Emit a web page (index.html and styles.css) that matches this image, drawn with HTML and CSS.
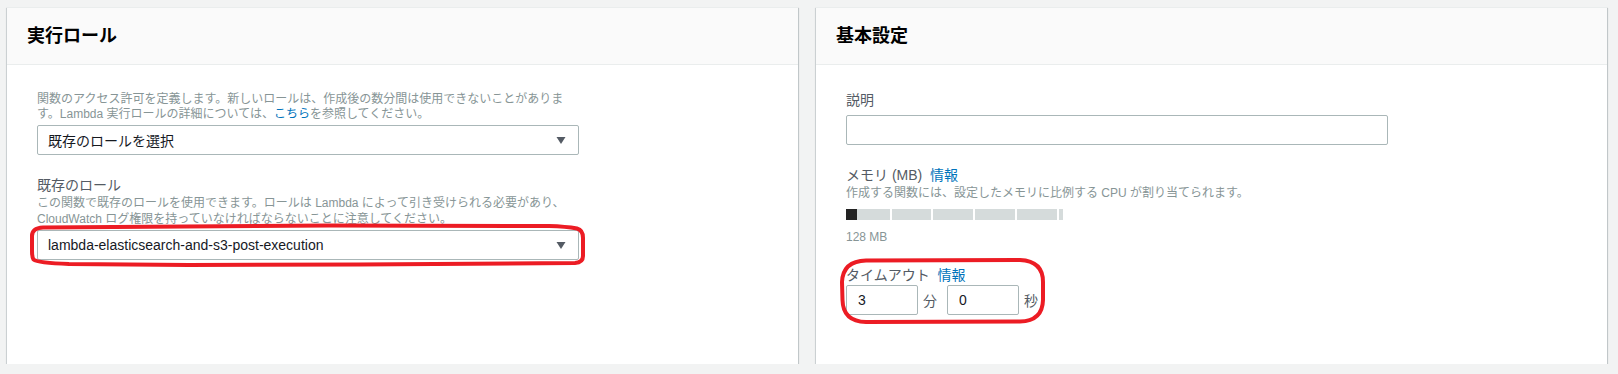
FILE: index.html
```html
<!DOCTYPE html>
<html lang="ja">
<head>
  <meta charset="UTF-8" />
  <meta name="viewport" content="width=device-width, initial-scale=1.0" />
  <title>Lambda 関数の設定</title>
  <link rel="stylesheet" href="styles.css">
</head>
<body>
  <div class="page">
    <!-- 実行ロール -->
    <section class="panel">
      <div class="panel-header">
        <h2>実行ロール</h2>
      </div>
      <div class="panel-body">
        <div class="col">
          <p class="desc">関数のアクセス許可を定義します。新しいロールは、作成後の数分間は使用できないことがあります。Lambda 実行ロールの詳細については、<a href="#">こちら</a>を参照してください。</p>
          <div class="select select-first">
            <span>既存のロールを選択</span>
            <svg class="caret" width="10" height="7" viewBox="0 0 10 7"><path d="M0.5 0H9.5L5 7Z" /></svg>
          </div>

          <div class="field">
            <div class="label">既存のロール</div>
            <p class="help">この関数で既存のロールを使用できます。ロールは Lambda によって引き受けられる必要があり、CloudWatch ログ権限を持っていなければならないことに注意してください。</p>
            <div class="marked">
              <div class="select">
                <span>lambda-elasticsearch-and-s3-post-execution</span>
                <svg class="caret" width="10" height="7" viewBox="0 0 10 7"><path d="M0.5 0H9.5L5 7Z" /></svg>
              </div>
              <svg class="ring ring-role" width="557" height="44" viewBox="0 0 557 44">
                <path d="M3 13Q3 5 14 4.5L300 2.5L520 3Q537 3.5 548 5.5Q554 7 554 15L554 33Q554 39.5 546 40L330 41.5L160 42L40 41Q9 40 4.5 36.5Q3 34 3 28Z" />
              </svg>
            </div>
          </div>
        </div>
      </div>
    </section>

    <!-- 基本設定 -->
    <section class="panel">
      <div class="panel-header">
        <h2>基本設定</h2>
      </div>
      <div class="panel-body">
        <div class="col">
          <div class="label">説明</div>
          <input class="text-input" type="text" value="" />

          <div class="field">
            <div class="label">メモリ (MB) <a href="#" class="info">情報</a></div>
            <p class="help">作成する関数には、設定したメモリに比例する CPU が割り当てられます。</p>
            <div class="slider">
              <span class="seg seg-first"></span>
              <span class="seg"></span>
              <span class="seg"></span>
              <span class="seg"></span>
              <span class="seg"></span>
              <span class="seg seg-last"></span>
            </div>
            <div class="slider-value">128 MB</div>
          </div>

          <div class="field timeout">
            <div class="label">タイムアウト <a href="#" class="info">情報</a></div>
            <div class="timeout-row">
              <input class="num" type="text" value="3" />
              <span class="unit">分</span>
              <input class="num" type="text" value="0" />
              <span class="unit">秒</span>
            </div>
            <svg class="ring ring-timeout" width="205" height="66" viewBox="0 0 205 66">
              <path d="M26 2.5L180 2Q203 3 203 24L203 42Q202.5 63 180 63.5L26 64Q3 63.5 2.5 42L2 24Q3 3 26 2.5Z" />
            </svg>
          </div>
        </div>
      </div>
    </section>
  </div>
</body>
</html>
```

FILE: styles.css
```css
* {
  box-sizing: border-box;
}
body {
  margin: 0;
  background: #f2f3f3;
  font-family: "Liberation Sans", "Noto Sans CJK JP", sans-serif;
  color: #16191f;
}
.page {
  display: grid;
  grid-template-columns: 1fr 1fr;
  gap: 18px;
  padding: 7px 11px 0 7px;
}
.panel {
  background: #fff;
  border-top: 1px solid #eaeded;
  box-shadow: 0 1px 1px 0 rgba(0, 28, 36, 0.5), 1px 1px 1px 0 rgba(0, 28, 36, 0.12), -1px 1px 1px 0 rgba(0, 28, 36, 0.08);
}
.panel-header {
  height: 57px;
  display: flex;
  align-items: center;
  padding: 0 20px;
  background: #fafafa;
  border-bottom: 1px solid #eaeded;
}
.panel-header h2 {
  margin: 0;
  font-size: 18px;
  font-weight: bold;
  line-height: 1;
  color: #000;
}
.panel-body {
  padding: 25px 30px 49px;
}
.col {
  width: 542px;
}
a {
  color: #0073bb;
  text-decoration: none;
}
.desc {
  margin: 2px 0 0;
  font-size: 12px;
  line-height: 15px;
  color: #879596;
}
.label {
  font-size: 14px;
  line-height: 20px;
  color: #545b64;
}
.label .info {
  font-size: 14px;
  margin-left: 4px;
}
.help {
  margin: 0;
  font-size: 12px;
  line-height: 16px;
  color: #879596;
}
.field {
  margin-top: 20px;
}
/* dropdowns */
.select {
  height: 30px;
  display: flex;
  align-items: center;
  justify-content: space-between;
  padding: 0 12px 0 10px;
  border: 1px solid #aab7b8;
  border-radius: 2px;
  font-size: 14px;
  color: #16191f;
  background: #fff;
}
.select-first {
  margin-top: 3px;
}
.caret path {
  fill: #545b64;
}
.marked {
  position: relative;
  margin-top: 3px;
}
/* hand drawn red rings */
.ring {
  position: absolute;
  pointer-events: none;
}
.ring path {
  fill: none;
  stroke: #ec1c24;
  stroke-width: 4;
  stroke-linejoin: round;
}
.ring-role {
  left: -8px;
  top: -7px;
}
.ring-timeout {
  left: -6px;
  top: -7px;
}
/* inputs */
.text-input,
.num {
  height: 30px;
  border: 1px solid #aab7b8;
  border-radius: 2px;
  font-family: "Liberation Sans", "Noto Sans CJK JP", sans-serif;
  font-size: 14px;
  color: #16191f;
  background: #fff;
  outline: none;
}
.text-input {
  display: block;
  width: 542px;
  margin-top: 5px;
  padding: 0 10px;
}
.num {
  width: 72px;
  padding: 0 11px;
}
/* memory slider */
.slider {
  display: flex;
  gap: 2px;
  width: 217px;
  height: 11px;
  margin-top: 8px;
}
.seg {
  width: 40px;
  background: #d5dbdb;
}
.seg-first {
  width: 44px;
  background: linear-gradient(to right, #232323 0, #232323 11px, #d5dbdb 11px);
}
.seg:nth-child(2) {
  width: 39px;
}
.seg-last {
  width: 4px;
}
.slider-value {
  margin-top: 9px;
  font-size: 12px;
  line-height: 16px;
  color: #879596;
}
/* timeout */
.timeout {
  position: relative;
  width: fit-content;
}
.timeout-row {
  display: flex;
  align-items: center;
}
.unit {
  font-size: 14px;
  color: #545b64;
  margin: 0 10px 0 5px;
}
.unit:last-child {
  margin-right: 0;
}
```
